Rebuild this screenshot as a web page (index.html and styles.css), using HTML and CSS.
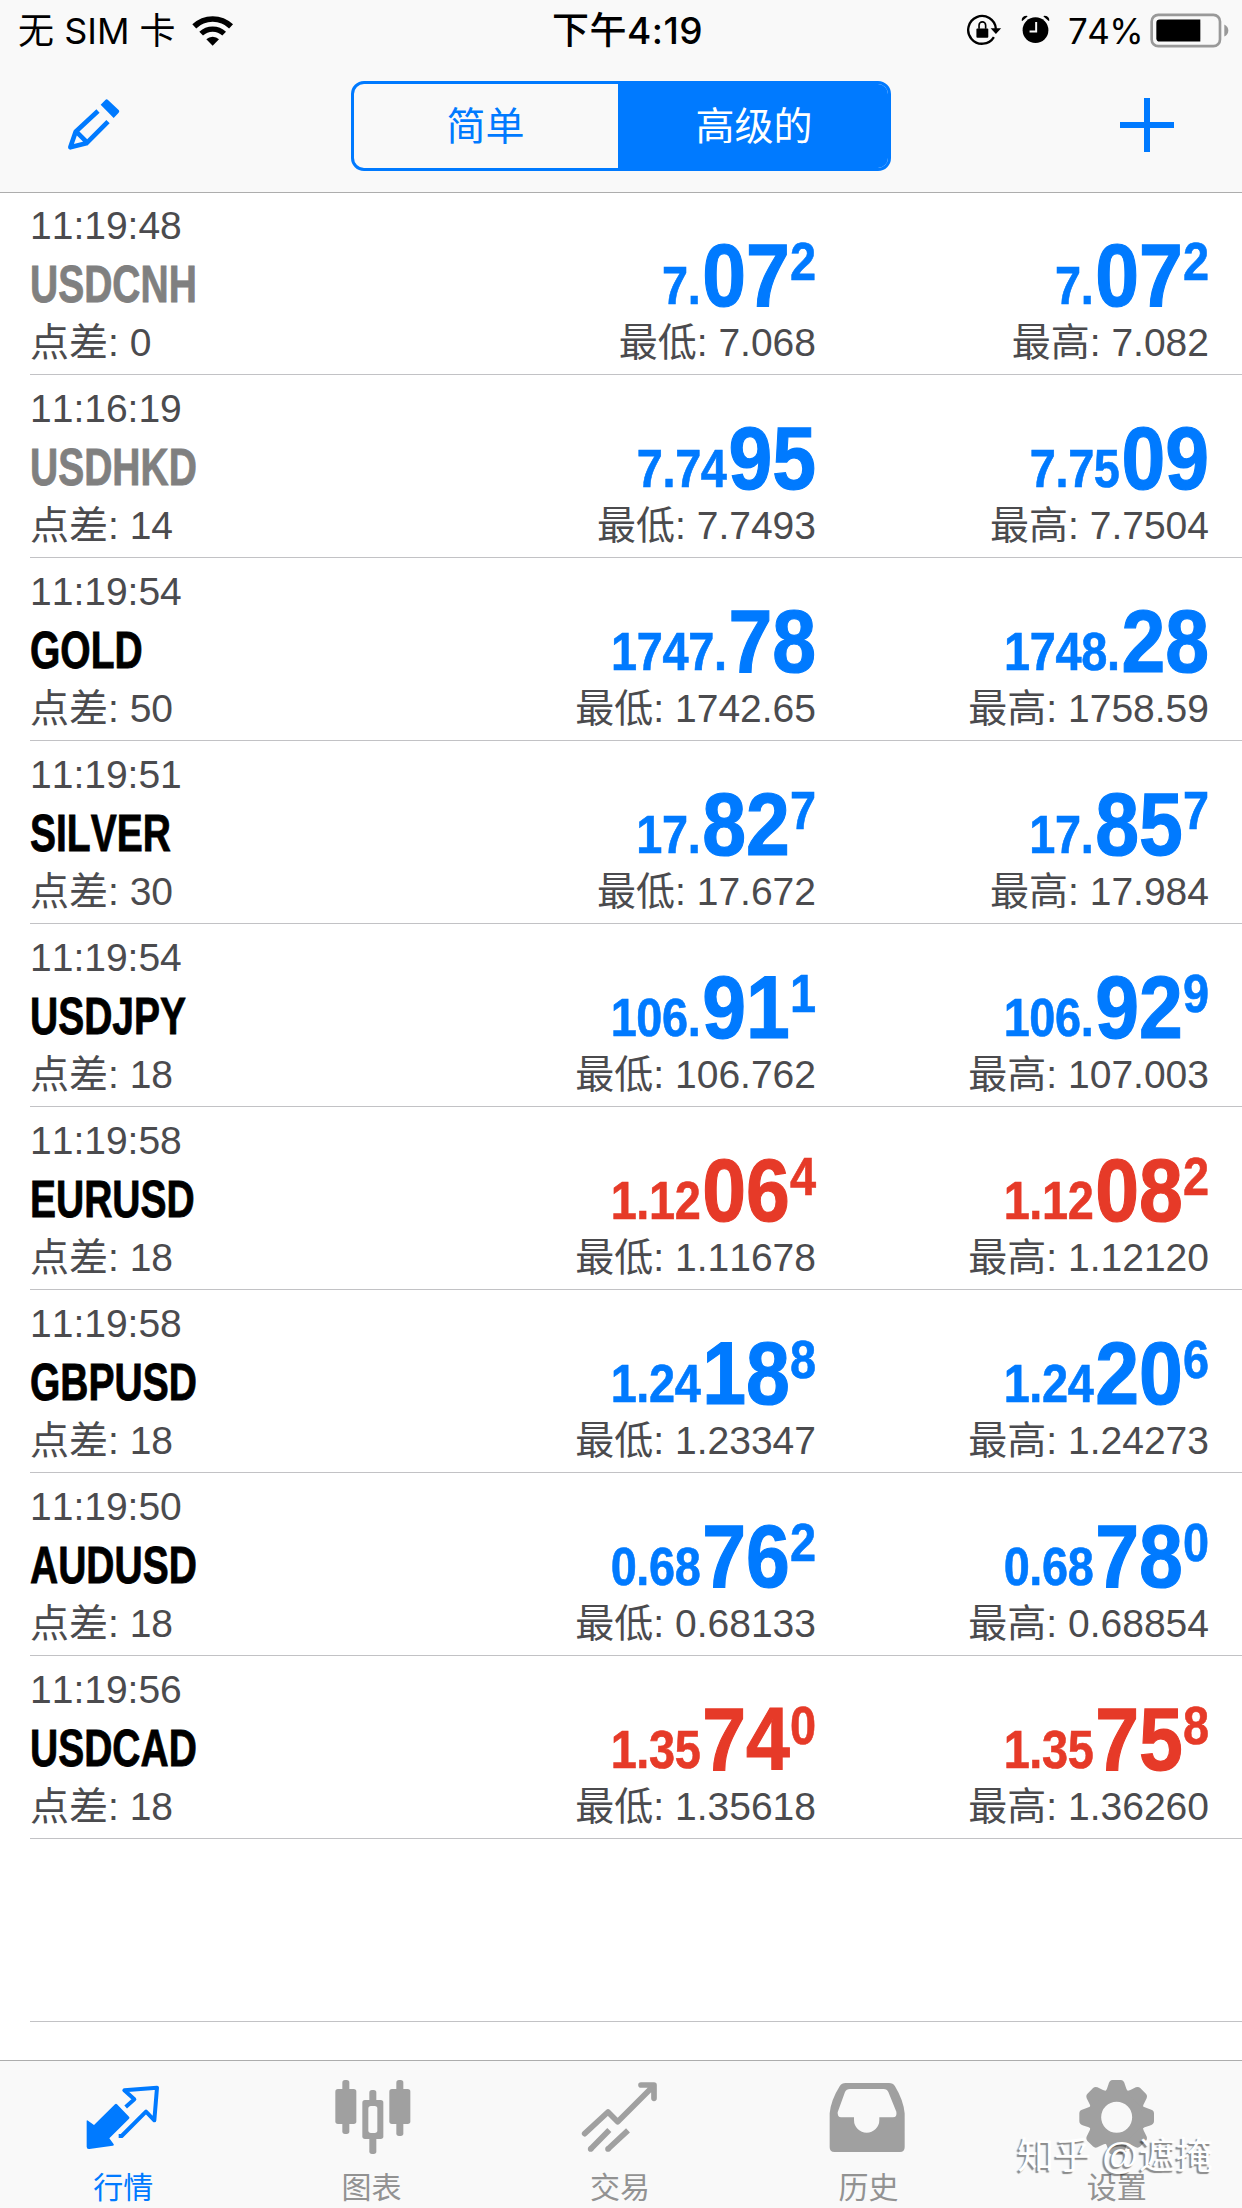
FILE: index.html
```html
<!DOCTYPE html>
<html lang="zh-CN">
<head>
    <meta charset="UTF-8">
    <meta name="viewport" content="width=device-width, initial-scale=1.0">
    <title>行情</title>
    <link rel="stylesheet" href="styles.css">
</head>
<body>
    <div class="app">
        <header class="header">
            <div class="status-bar">
                <div class="status-left">
                    <span class="carrier">无 SIM 卡</span>
                    <svg class="wifi" viewBox="0 0 126 93">
                        <path d="M6.8 34A80 80 0 0 1 117.2 34" fill="none" stroke="#000" stroke-width="17"/>
                        <path d="M27.5 56A50 50 0 0 1 96.5 56" fill="none" stroke="#000" stroke-width="16"/>
                        <path d="M43 73A27 27 0 0 1 81 73L62 92Z"/>
                    </svg>
                </div>
                <div class="clock">下午4:19</div>
                <div class="status-right">
                    <svg class="lock" viewBox="0 0 108 100">
                        <path d="M90 48A42 42 0 1 0 84 73" fill="none" stroke="#000" stroke-width="7"/>
                        <path d="M74 46H106L90 64Z"/>
                        <rect x="31" y="47" width="36" height="28" rx="3"/>
                        <path d="M39 48V37a10 10 0 0 1 20 0V48" fill="none" stroke="#000" stroke-width="5"/>
                    </svg>
                    <svg class="alarm" viewBox="0 0 92 100">
                        <circle cx="46" cy="52" r="39"/>
                        <path d="M4 23Q4 8 20 8Q23 9 21 11L6 24ZM88 23Q88 8 72 8Q69 9 71 11L86 24Z"/>
                        <path d="M48 27V56H28" fill="none" stroke="#f9f9f9" stroke-width="6"/>
                    </svg>
                    <span class="percent">74%</span>
                    <svg class="battery" viewBox="0 0 240 104">
                        <rect x="5" y="5" width="205" height="94" rx="20" fill="none" stroke="#999" stroke-width="8"/>
                        <path d="M29 19H151V85H29Q19 85 19 75V29Q19 19 29 19Z"/>
                        <path d="M223 34Q235 40 235 52Q235 64 223 70Z" fill="#999"/>
                    </svg>
                </div>
            </div>
            <nav class="nav-bar">
                <svg class="edit" viewBox="0 0 162 162">
                    <path d="M101 23L115 9Q119 5 123 9L155 39Q159 43 155 47L140 63Z"/>
                    <path d="M93 42L26 104L10 151L58 139L123 74M27 103L61 137" fill="none" stroke="#007aff" stroke-width="14" stroke-linejoin="round"/>
                </svg>
                <div class="segmented">
                    <div class="segment">简单</div>
                    <div class="segment active">高级的</div>
                </div>
                <svg class="add" viewBox="0 0 54 54">
                    <path d="M27 0V54M0 27H54" stroke="#007aff" stroke-width="6"/>
                </svg>
            </nav>
        </header>

        <main class="quotes">
            <div class="quote closed">
                <div class="info"><div class="time">11:19:48</div><div class="symbol">USDCNH</div><div class="detail">点差: 0</div></div>
                <div class="side"><div class="price"><small>7.</small>07<sup>2</sup></div><div class="detail">最低: 7.068</div></div>
                <div class="side"><div class="price"><small>7.</small>07<sup>2</sup></div><div class="detail">最高: 7.082</div></div>
            </div>
            <div class="quote closed">
                <div class="info"><div class="time">11:16:19</div><div class="symbol">USDHKD</div><div class="detail">点差: 14</div></div>
                <div class="side"><div class="price"><small>7.74</small>95</div><div class="detail">最低: 7.7493</div></div>
                <div class="side"><div class="price"><small>7.75</small>09</div><div class="detail">最高: 7.7504</div></div>
            </div>
            <div class="quote">
                <div class="info"><div class="time">11:19:54</div><div class="symbol">GOLD</div><div class="detail">点差: 50</div></div>
                <div class="side"><div class="price"><small>1747.</small>78</div><div class="detail">最低: 1742.65</div></div>
                <div class="side"><div class="price"><small>1748.</small>28</div><div class="detail">最高: 1758.59</div></div>
            </div>
            <div class="quote">
                <div class="info"><div class="time">11:19:51</div><div class="symbol">SILVER</div><div class="detail">点差: 30</div></div>
                <div class="side"><div class="price"><small>17.</small>82<sup>7</sup></div><div class="detail">最低: 17.672</div></div>
                <div class="side"><div class="price"><small>17.</small>85<sup>7</sup></div><div class="detail">最高: 17.984</div></div>
            </div>
            <div class="quote">
                <div class="info"><div class="time">11:19:54</div><div class="symbol">USDJPY</div><div class="detail">点差: 18</div></div>
                <div class="side"><div class="price"><small>106.</small>91<sup>1</sup></div><div class="detail">最低: 106.762</div></div>
                <div class="side"><div class="price"><small>106.</small>92<sup>9</sup></div><div class="detail">最高: 107.003</div></div>
            </div>
            <div class="quote down">
                <div class="info"><div class="time">11:19:58</div><div class="symbol">EURUSD</div><div class="detail">点差: 18</div></div>
                <div class="side"><div class="price"><small>1.12</small>06<sup>4</sup></div><div class="detail">最低: 1.11678</div></div>
                <div class="side"><div class="price"><small>1.12</small>08<sup>2</sup></div><div class="detail">最高: 1.12120</div></div>
            </div>
            <div class="quote">
                <div class="info"><div class="time">11:19:58</div><div class="symbol">GBPUSD</div><div class="detail">点差: 18</div></div>
                <div class="side"><div class="price"><small>1.24</small>18<sup>8</sup></div><div class="detail">最低: 1.23347</div></div>
                <div class="side"><div class="price"><small>1.24</small>20<sup>6</sup></div><div class="detail">最高: 1.24273</div></div>
            </div>
            <div class="quote">
                <div class="info"><div class="time">11:19:50</div><div class="symbol">AUDUSD</div><div class="detail">点差: 18</div></div>
                <div class="side"><div class="price"><small>0.68</small>76<sup>2</sup></div><div class="detail">最低: 0.68133</div></div>
                <div class="side"><div class="price"><small>0.68</small>78<sup>0</sup></div><div class="detail">最高: 0.68854</div></div>
            </div>
            <div class="quote down">
                <div class="info"><div class="time">11:19:56</div><div class="symbol">USDCAD</div><div class="detail">点差: 18</div></div>
                <div class="side"><div class="price"><small>1.35</small>74<sup>0</sup></div><div class="detail">最低: 1.35618</div></div>
                <div class="side"><div class="price"><small>1.35</small>75<sup>8</sup></div><div class="detail">最高: 1.36260</div></div>
            </div>
            <div class="quote"></div>
        </main>

        <footer class="tab-bar">
            <div class="tab selected">
                <svg viewBox="0 0 252 252">
                    <path d="M18 137L36 150L99 88Q102 85 105 88L141 125Q144 128 141 131L82 190L94 206Q98 211 92 212L22 222Q14 223 14 215V138Q14 134 18 137Z"/>
                    <path d="M131 96L157 73L127 46L225 38L217 136L192 110L119 183H110" fill="none" stroke="#007aff" stroke-width="12" stroke-linejoin="round"/>
                </svg>
                <span>行情</span>
            </div>
            <div class="tab">
                <svg viewBox="0 0 252 252">
                    <rect x="34" y="15" width="21" height="162" rx="8"/>
                    <rect x="13" y="42" width="63" height="105" rx="8"/>
                    <rect x="115" y="45" width="21" height="192" rx="8"/>
                    <rect x="94" y="75" width="63" height="117" rx="8"/>
                    <rect x="112" y="93" width="27" height="81" rx="8" fill="#f9f9f9"/>
                    <rect x="196" y="15" width="21" height="168" rx="8"/>
                    <rect x="175" y="42" width="63" height="105" rx="8"/>
                </svg>
                <span>图表</span>
            </div>
            <div class="tab">
                <svg class="lines" viewBox="0 0 252 252">
                    <path d="M17 176L87 111L116 140L224 32M186 30H225V70" stroke-linecap="round" stroke-linejoin="round"/>
                    <path d="M35 222L91 165M87 222L147 166"/>
                    <path d="M35 222h0.1M87 222h0.1" stroke-linecap="round"/>
                </svg>
                <span>交易</span>
            </div>
            <div class="tab">
                <svg viewBox="0 0 252 252">
                    <path fill-rule="evenodd" d="M8 115Q12 75 38 34Q44 24 56 24H186Q198 24 204 34Q229 75 233 115V217Q233 231 219 231H22Q8 231 8 217ZM69 42Q58 42 54 51L32 112Q31 127 42 127H81V135A38 38 0 0 0 157 135V127H198Q211 127 208 110L184 51Q180 42 170 42Z"/>
                </svg>
                <span>历史</span>
            </div>
            <div class="tab">
                <svg viewBox="-122 -127 252 252">
                    <defs>
                        <path id="tooth" d="M-36 -74Q-29 -82 -25 -98Q-22 -112 -12 -112H12Q22 -112 25 -98Q29 -82 36 -74Z"/>
                    </defs>
                    <circle r="66" fill="none" stroke="#a0a0a0" stroke-width="39"/>
                    <use href="#tooth"/>
                    <use href="#tooth" transform="rotate(45)"/>
                    <use href="#tooth" transform="rotate(90)"/>
                    <use href="#tooth" transform="rotate(135)"/>
                    <use href="#tooth" transform="rotate(180)"/>
                    <use href="#tooth" transform="rotate(225)"/>
                    <use href="#tooth" transform="rotate(270)"/>
                    <use href="#tooth" transform="rotate(315)"/>
                </svg>
                <span>设置</span>
            </div>
            <div class="watermark">知乎 @遮掩</div>
        </footer>
    </div>
</body>
</html>
```
FILE: styles.css
```css
body {
    margin: 0;
    background-color: #fff;
    font-family: "Liberation Sans", "Noto Sans CJK SC", sans-serif;
    font-kerning: none;
}
.app {
    display: flex;
    flex-direction: column;
    height: 2208px;
    overflow: hidden;
}
.header {
    height: 192px;
    background-color: #f9f9f9;
    border-bottom: 1px solid #adadad;
    margin-bottom: -1px;
    flex-shrink: 0;
    z-index: 1;
}
.status-bar {
    display: grid;
    grid-template-columns: 1fr auto 1fr;
    align-items: center;
    height: 62px;
    padding: 0 13px 0 18px;
    box-sizing: border-box;
    font-family: Inter, "Noto Sans CJK SC", sans-serif;
    font-size: 36px;
    line-height: 62px;
}
.status-left, .status-right {
    display: flex;
    align-items: center;
}
.status-right {
    justify-content: flex-end;
}
.carrier {
    margin-right: 16px;
}
.clock {
    font-size: 37px;
    font-weight: 500;
    letter-spacing: 0.5px;
    padding-left: 8px;
}
.wifi {
    width: 42px;
    height: 31px;
    margin-top: -2px;
}
.lock {
    width: 36px;
    height: 33px;
    margin-right: 18px;
    margin-top: -3px;
}
.alarm {
    width: 31px;
    height: 33px;
    margin-right: 17px;
    margin-top: -3px;
}
.percent {
    margin-right: 7px;
    font-size: 35px;
    letter-spacing: -0.6px;
}
.battery {
    width: 80px;
    height: 35px;
    margin-right: -1px;
    margin-top: -2px;
}
.nav-bar {
    display: flex;
    justify-content: space-between;
    align-items: center;
    height: 90px;
    margin-top: 19px;
    padding: 0 68px 0 67px;
}
.edit {
    width: 54px;
    height: 54px;
    margin-top: -4px;
    fill: #007aff;
}
.add {
    width: 54px;
    height: 54px;
    margin-top: -2px;
}
.segmented {
    display: flex;
    width: 540px;
    height: 90px;
    box-sizing: border-box;
    border: 3px solid #007aff;
    border-radius: 13px;
    overflow: hidden;
}
.segment {
    width: 264px;
    line-height: 86px;
    font-size: 39px;
    text-align: center;
    color: #007aff;
}
.segment.active {
    flex: 1;
    padding-left: 3px;
    background-color: #007aff;
    color: #fff;
}
.quotes {
    flex: 1;
    min-height: 0;
    padding-left: 30px;
}
.quote {
    display: grid;
    grid-template-columns: 1fr 393px 393px;
    height: 183px;
    box-sizing: border-box;
    padding: 6px 33px 0 0;
    border-bottom: 1px solid #c2c2c5;
    color: #007aff;
}
.quote.down {
    color: #e63a28;
}
.time {
    font-size: 39px;
    line-height: 55px;
    color: #4b4b4e;
}
.detail {
    font-size: 39px;
    line-height: 54px;
    color: #4b4b4e;
}
.symbol {
    margin-bottom: -1px;
    font-size: 51px;
    font-weight: bold;
    line-height: 64px;
    color: #000;
    -webkit-text-stroke: 0.8px;
    transform: scaleX(0.765);
    transform-origin: left;
}
.closed .symbol {
    color: #808080;
}
.side {
    text-align: right;
    white-space: nowrap;
}
/* condensed bold digits */
.price {
    padding: 38px 0 1px;
    font-size: 89px;
    font-weight: bold;
    line-height: 79px;
    -webkit-text-stroke: 1.2px;
    transform: scaleX(0.885);
    transform-origin: right;
}
.price small, .price sup {
    font-size: 53px;
    line-height: 0;
    -webkit-text-stroke: 0.6px;
}
.price small {
    vertical-align: 2px;
    margin-right: 2px;
    letter-spacing: -0.4px;
}
.price sup {
    vertical-align: 26px;
}
.tab-bar {
    position: relative;
    display: flex;
    height: 148px;
    box-sizing: border-box;
    flex-shrink: 0;
    background-color: #f9f9f9;
    border-top: 1px solid #adadad;
}
.tab {
    flex: 1;
    display: flex;
    flex-direction: column;
    align-items: center;
    padding-top: 14px;
    color: #929292;
    font-size: 30px;
    line-height: 58px;
}
.tab span {
    margin-right: 2px;
}
.tab svg {
    width: 84px;
    height: 84px;
    flex-shrink: 0;
    fill: #a0a0a0;
}
.tab svg.lines {
    fill: none;
    stroke: #a0a0a0;
    stroke-width: 17px;
}
.tab.selected {
    color: #007aff;
}
.tab.selected svg {
    fill: #007aff;
}
.watermark {
    position: absolute;
    right: 29px;
    top: 69px;
    font-size: 37px;
    line-height: 54px;
    color: #fff;
    text-shadow: -2px 2px 1px rgba(0, 0, 0, 0.45);
}
```
